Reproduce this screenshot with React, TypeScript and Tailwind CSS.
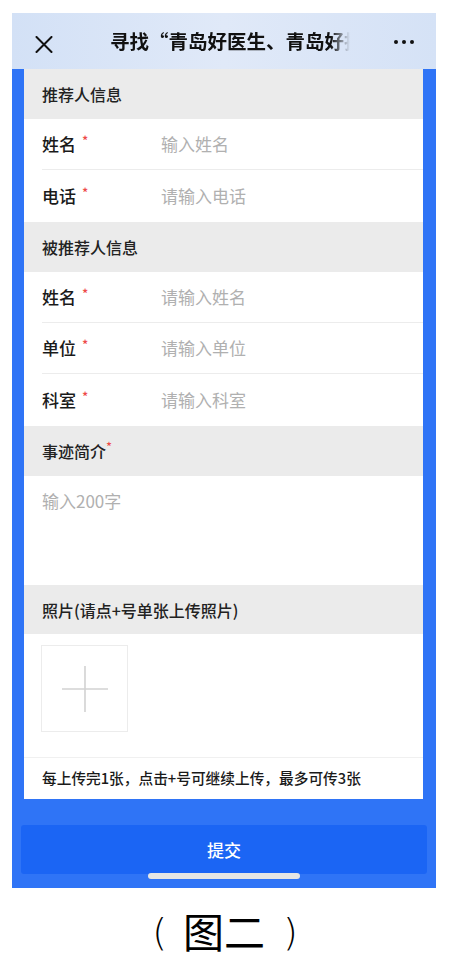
import React from "react";

const font = { fontFamily: '"Noto Sans CJK SC", "Noto Sans", sans-serif' };

function SectionHeader({ children }: { children: React.ReactNode }) {
  return (
    <div className="h-[50px] bg-[#ebebeb] flex items-center pl-[18px] text-[16px] font-medium text-[#222]">
      {children}
    </div>
  );
}

function Row({ label, placeholder, h, last }: { label: string; placeholder: string; h: number; last?: boolean }) {
  return (
    <div className="bg-white pl-[18px]" style={{ height: h }}>
      <div className={`h-full flex items-center ${last ? "" : "border-b border-[#ececec]"}`}>
        <div className="w-[119px] flex items-center text-[17px] font-medium text-[#1a1a1a]">
          <span>{label}</span>
          <span className="text-[#ee4a48] text-[13px] ml-[6px] -mt-[6px]">*</span>
        </div>
        <div className="text-[17px] text-[#b0b0b0]">{placeholder}</div>
      </div>
    </div>
  );
}

export default function App() {
  return (
    <div className="w-[450px] h-[972px] bg-white overflow-hidden" style={font}>
      <div className="pt-[13px] px-[12px]">
        <div className="w-[424px] bg-[#2f74f6]">
          {/* header */}
          <div className="h-[56px] bg-[linear-gradient(90deg,#d3e1f6,#e0e9f8_50%,#d5e2f6)] flex items-center relative">
            <svg className="absolute left-[23px] top-[23px]" width="18" height="17" viewBox="0 0 18 17">
              <path d="M1.5 1 L16.5 16 M16.5 1 L1.5 16" stroke="#111" strokeWidth="2" strokeLinecap="round" />
            </svg>
            <div className="ml-[98px] w-[240px] overflow-hidden whitespace-nowrap text-[19.5px] font-semibold text-[#111] [mask-image:linear-gradient(to_right,black_92%,transparent_100%)]">
              寻找“青岛好医生、青岛好护士”
            </div>
            <div className="absolute left-[382px] top-[27px] flex gap-[4px]">
              <span className="w-[4px] h-[4px] rounded-full bg-[#111]" />
              <span className="w-[4px] h-[4px] rounded-full bg-[#111]" />
              <span className="w-[4px] h-[4px] rounded-full bg-[#111]" />
            </div>
          </div>

          {/* form card */}
          <div className="ml-[12px] mr-[13px] bg-white">
            <SectionHeader>推荐人信息</SectionHeader>
            <Row label="姓名" placeholder="输入姓名" h={51} />
            <Row label="电话" placeholder="请输入电话" h={52} last />
            <SectionHeader>被推荐人信息</SectionHeader>
            <Row label="姓名" placeholder="请输入姓名" h={51} />
            <Row label="单位" placeholder="请输入单位" h={51} />
            <Row label="科室" placeholder="请输入科室" h={52} last />
            <SectionHeader>
              事迹简介<span className="text-[#ee4a48] text-[13px] font-normal -mt-[8px]">*</span>
            </SectionHeader>
            <div className="h-[109px] bg-white pl-[18px] pt-[12px] text-[17px] text-[#b0b0b0]">输入200字</div>
            <div className="h-[49px] bg-[#ebebeb] flex items-center pl-[18px] text-[16px] font-medium text-[#222]">
              照片(请点+号单张上传照片)
            </div>
            <div className="h-[124px] pl-[17px] pt-[11px] border-b border-[#f0f0f0]">
              <div className="w-[87px] h-[87px] border border-[#ececec] flex items-center justify-center">
                <svg width="46" height="46" viewBox="0 0 46 46">
                  <path d="M23 0 V46 M0 23 H46" stroke="#d2d2d2" strokeWidth="1.6" />
                </svg>
              </div>
            </div>
            <div className="h-[41px] pl-[18px] flex items-center text-[14.7px] font-medium text-[#1a1a1a]">
              每上传完1张，点击+号可继续上传，最多可传3张
            </div>
          </div>

          {/* bottom */}
          <div className="pt-[26px] px-[9px] pb-[14px] relative">
            <div className="h-[49px] rounded-[3px] bg-[#1b65f4] flex items-center justify-center text-white text-[17px] font-medium">
              提交
            </div>
            <div className="absolute left-[136px] top-[74px] w-[152px] h-[6px] rounded-full bg-[#e6e6e4]" />
          </div>
        </div>
      </div>

      {/* caption */}
      <div className="mt-[22px] flex items-center justify-center text-black">
        <span className="text-[38px] font-light leading-none mt-[2px]" style={{ fontFamily: '"DejaVu Sans", sans-serif' }}>(</span>
        <span className="ml-[16px] text-[41px] leading-none">图二</span>
        <span className="ml-[18px] text-[38px] font-light leading-none mt-[2px]" style={{ fontFamily: '"DejaVu Sans", sans-serif' }}>)</span>
      </div>
    </div>
  );
}
